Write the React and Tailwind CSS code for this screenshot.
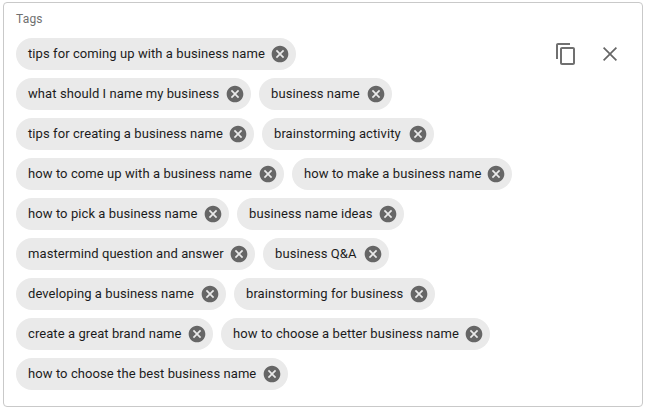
const rows = [
  [['tips for coming up with a business name', 'w-[280px]']],
  [['what should I name my business', 'w-[235px]'], ['business name', 'w-[133px]']],
  [['tips for creating a business name', 'w-[238px]'], ['brainstorming activity', 'w-[172px]']],
  [['how to come up with a business name', 'w-[268px]'], ['how to make a business name', 'w-[220px]']],
  [['how to pick a business name', 'w-[213px]'], ['business name ideas', 'w-[167px]']],
  [['mastermind question and answer', 'w-[239px]'], ['business Q&A', 'w-[126px]']],
  [['developing a business name', 'w-[210px]'], ['brainstorming for business', 'w-[201px]']],
  [['create a great brand name', 'w-[197px]'], ['how to choose a better business name', 'w-[269px]']],
  [['how to choose the best business name', 'w-[272px]']],
];

function Chip({ label, width }) {
  return (
    <div className={`flex h-8 items-center justify-between rounded-full bg-[#eaeaea] pl-3 pr-[6px] ${width}`}>
      <span className="whitespace-nowrap text-[13px] leading-5 tracking-[0.08px] text-[#1c1c1c]">{label}</span>
      <svg viewBox="0 0 24 24" className="size-5 shrink-0" fill="#666666">
        <path d="M12 2C6.47 2 2 6.47 2 12s4.47 10 10 10 10-4.47 10-10S17.53 2 12 2zm5 13.59L15.59 17 12 13.41 8.41 17 7 15.59 10.59 12 7 8.41 8.41 7 12 10.59 15.59 7 17 8.41 13.41 12 17 15.59z" />
      </svg>
    </div>
  );
}

export default function App() {
  return (
    <div className="h-[410px] w-[645px] bg-white pl-[3px] pt-[2px] font-['Roboto',sans-serif]">
      <div className="flex h-[405px] w-[640px] justify-between rounded-[4px] border border-[#c9c9c9] pl-3 pr-5 pt-[7px]">
        <div>
          <div className="h-7 text-[12px] leading-[18px] tracking-[0.2px] text-[#707070]">Tags</div>
          <div className="flex flex-col gap-2">
            {rows.map((row, i) => (
              <div key={i} className="flex gap-2">
                {row.map(([label, width]) => <Chip key={label} label={label} width={width} />)}
              </div>
            ))}
          </div>
        </div>
        <div className="flex gap-5 pt-8">
          <svg viewBox="0 0 24 24" className="size-6" fill="#707070">
            <path d="M16 1H4c-1.100 0-2 .9-2 2v14h2V3h12V1zm3 4H8c-1.100 0-2 .9-2 2v14c0 1.100.9 2 2 2h11c1.100 0 2-.9 2-2V7c0-1.100-.9-2-2-2zm0 16H8V7h11v14z" />
          </svg>
          <svg viewBox="0 0 24 24" className="size-6" fill="#666666">
            <path d="M19 6.200 17.800 5 12 10.800 6.200 5 5 6.200 10.800 12 5 17.800 6.200 19 12 13.200 17.800 19 19 17.800 13.200 12z" />
          </svg>
        </div>
      </div>
    </div>
  );
}
